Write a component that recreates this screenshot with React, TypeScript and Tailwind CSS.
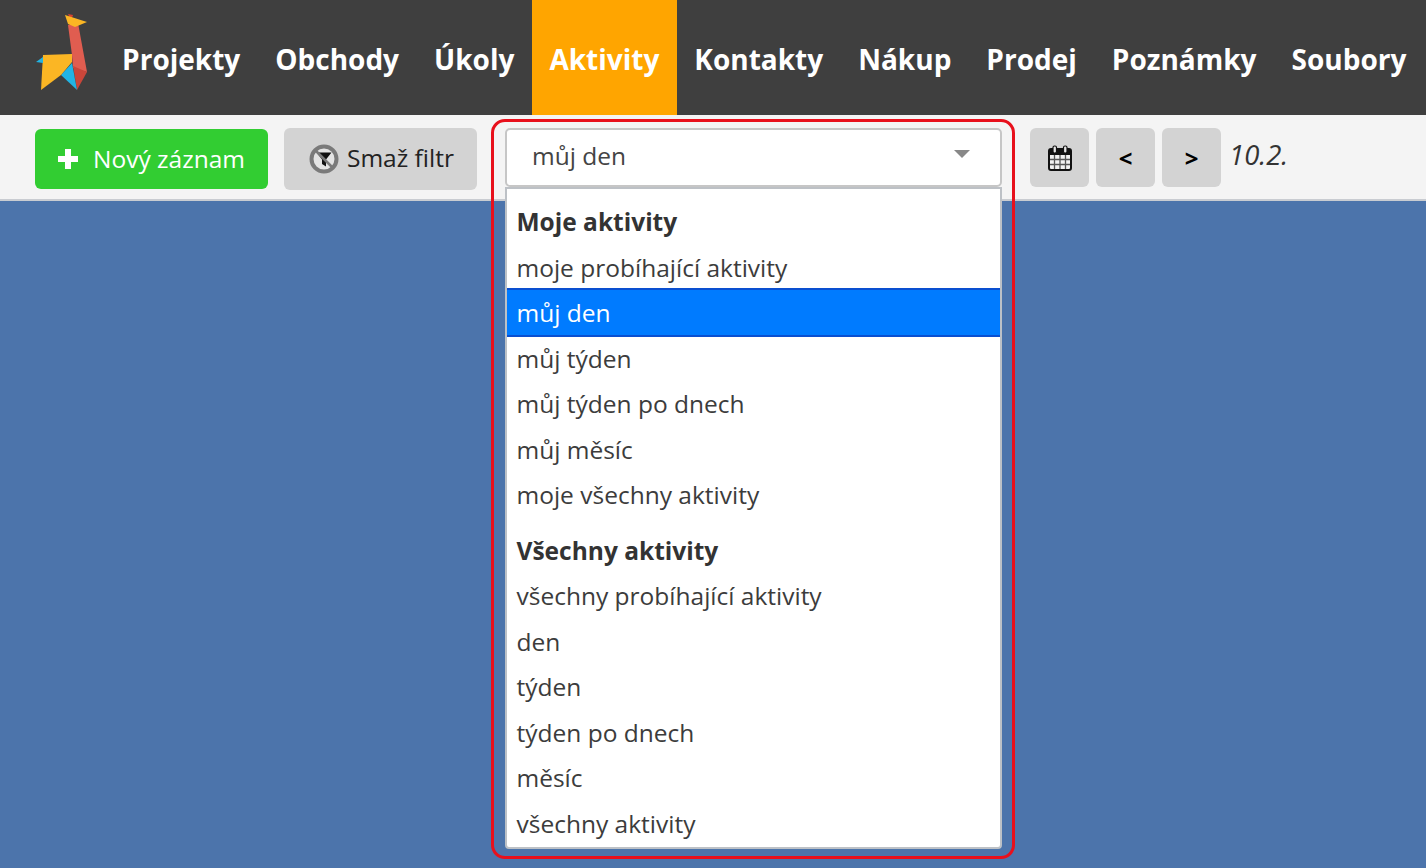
const navItems = ["Projekty", "Obchody", "Úkoly", "Aktivity", "Kontakty", "Nákup", "Prodej", "Poznámky", "Soubory"];
const mine = ["moje probíhající aktivity", "můj den", "můj týden", "můj týden po dnech", "můj měsíc", "moje všechny aktivity"];
const all = ["všechny probíhající aktivity", "den", "týden", "týden po dnech", "měsíc", "všechny aktivity"];

function Logo() {
  return (
    <svg width="60" height="80" viewBox="0 0 60 80" className="shrink-0 self-start mt-[13px]">
      <g transform="translate(-35,-13)">
        <polygon points="68,14 73,15 71,21" fill="#d8432f" />
        <polygon points="68,25 78,23 87,72 73,68 72,55" fill="#e05d50" />
        <polygon points="65,15 87,22 75,27 68,24" fill="#fbb624" />
        <polygon points="73,66 87,72 77,90" fill="#c9463a" />
        <polygon points="72,63 77,90 61,75" fill="#22b4e4" />
        <polygon points="43,55 72,54 72,62 61,75 41,90" fill="#fbb624" />
        <polygon points="43,57 43,63 36,62" fill="#22b4e4" />
      </g>
    </svg>
  );
}

function Item({ label, selected }: { label: string; selected?: boolean }) {
  return (
    <div
      className={
        selected
          ? "h-[49px] -my-[1.75px] flex items-center pl-[9.5px] pt-[2px] bg-[#007bff] border-y-2 border-[#0a4fd0] text-white"
          : "h-[45.5px] flex items-center pl-[9.5px] pt-[2px] text-[#3c3c3c]"
      }
    >
      {label}
    </div>
  );
}

function Header({ label }: { label: string }) {
  return <div className="h-[45.5px] flex items-center pl-[9.5px] pt-[2px] font-bold text-[#333333]">{label}</div>;
}

function GrayButton({ children }: { children: React.ReactNode }) {
  return (
    <div className="w-[59px] h-[59px] rounded-[6px] bg-[#d3d3d3] flex items-center justify-center text-black">
      {children}
    </div>
  );
}

export default function App() {
  return (
    <div className="w-[1426px] h-[868px] overflow-hidden flex flex-col bg-[#4c74ab] font-['Open_Sans',sans-serif]">
      <div className="h-[115px] shrink-0 bg-[#3f3f3f] flex items-stretch pl-[35px]">
        <Logo />
        <div className="flex items-stretch ml-[9.6px]">
          {navItems.map((n) => (
            <div
              key={n}
              className={`flex items-center px-[17.5px] pt-[2px] text-[28px] font-bold text-white ${n === "Aktivity" ? "bg-[#ffa500]" : ""}`}
            >
              {n}
            </div>
          ))}
        </div>
      </div>

      <div className="h-[86px] shrink-0 bg-[#f4f4f4] border-b-2 border-[#c9ccd1] flex items-start pl-[35px] pt-[13px]">
        <div className="w-[233px] h-[60px] mt-px rounded-[6px] bg-[#32cd32] flex items-center pl-[22px] gap-[14px] text-white text-[24.5px]">
          <svg width="22" height="22" viewBox="0 0 22 22" className="shrink-0">
            <path d="M8 1h6v7h7v6h-7v7H8v-7H1V8h7z" fill="#fff" />
          </svg>
          <span className="leading-none">Nový záznam</span>
        </div>

        <div className="ml-[16px] w-[193px] h-[62px] rounded-[6px] bg-[#d3d3d3] flex items-center pl-[25px] gap-[8px] pb-[2px] text-[#222222] text-[24.5px]">
          <svg width="30" height="30" viewBox="0 0 30 30" className="shrink-0 mt-[2px]">
            <circle cx="15" cy="15" r="12.5" fill="#e4e4e4" stroke="#7a7a7a" strokeWidth="4" />
            <path d="M7.5 8.5h15l-5.5 7v7l-4-2.5v-4.500z" fill="#111" />
            <path d="M6.500 6.500l17 17" stroke="#7a7a7a" strokeWidth="2.500" />
          </svg>
          <span>Smaž filtr</span>
        </div>

        <div className="relative ml-[28px] w-[497px] h-[59px]">
          <div className="w-[497px] h-[59px] bg-white border-2 border-[#c6c6c6] rounded-[5px] flex items-center pl-[25px] pb-[2px] text-[24.5px] text-[#444444]">
            můj den
          </div>
          <div className="absolute right-[32px] top-[22px] w-0 h-0 border-x-[8px] border-x-transparent border-t-[8px] border-t-[#888888]" />
          <div className="absolute left-0 top-[59px] w-[497px] h-[662px] bg-white border-2 border-[#bdc1c6] rounded-b-[4px] pt-[10px] text-[24.5px]">
            <Header label="Moje aktivity" />
            {mine.map((m) => (
              <Item key={m} label={m} selected={m === "můj den"} />
            ))}
            <div className="h-[10px]" />
            <Header label="Všechny aktivity" />
            {all.map((m) => (
              <Item key={m} label={m} />
            ))}
          </div>
          <div className="absolute -left-[14px] -top-[9px] w-[524px] h-[740px] border-[3px] border-[#e8101c] rounded-[14px] pointer-events-none" />
        </div>

        <div className="ml-[28px] flex gap-[7px]">
          <GrayButton>
            <svg width="24" height="26" viewBox="0 0 24 26">
              <rect x="1" y="4" width="22" height="21" rx="2" fill="#f1f1f1" stroke="#111" strokeWidth="2" />
              <rect x="1" y="4" width="22" height="6" fill="#111" />
              <path d="M6.500 10v14M12 10v14M17.500 10v14M2 14.500h20M2 19.500h20" stroke="#555" strokeWidth="1.300" />
              <rect x="5" y="1" width="3.500" height="7" rx="1.500" fill="#e5e5e5" stroke="#111" strokeWidth="1.200" />
              <rect x="15.500" y="1" width="3.500" height="7" rx="1.500" fill="#e5e5e5" stroke="#111" strokeWidth="1.200" />
            </svg>
          </GrayButton>
          <GrayButton><span className="text-[24px] font-bold leading-none">&lt;</span></GrayButton>
          <GrayButton><span className="text-[24px] font-bold leading-none">&gt;</span></GrayButton>
        </div>
        <div className="ml-[8px] h-[54px] flex items-center text-[27.5px] italic text-[#333333]">10.2.</div>
      </div>
    </div>
  );
}
